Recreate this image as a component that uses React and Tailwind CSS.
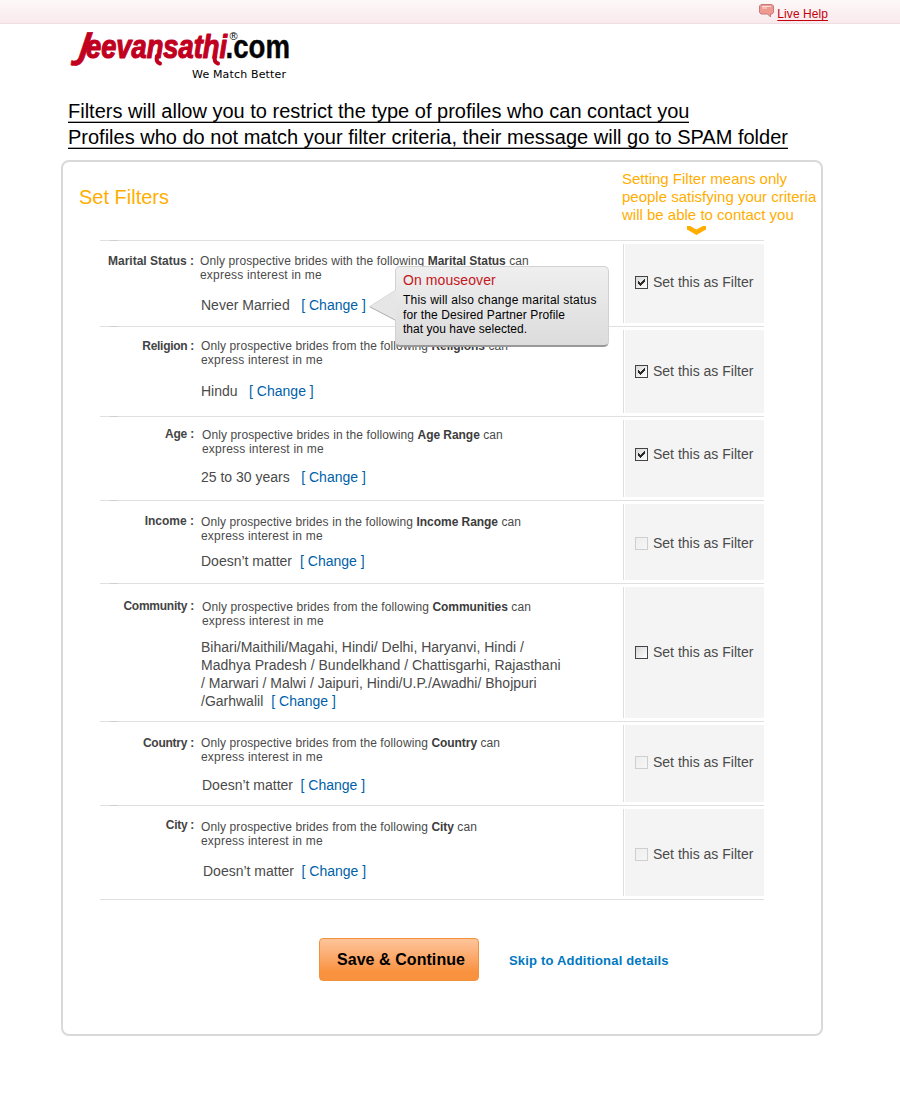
const rows = [
  {
    label: 'Marital Status :', labelCls: 'mt-[13px]', pre: 'with the following', strong: 'Marital Status',
    row: 'h-[86px]', desc: 'mt-[13px] ml-[6px]', value: ['Never Married'], valueCls: 'mt-[14px] ml-[7px]', gap: 'ml-[11.5px]',
    cell: 'pb-[2px]', state: 'checked', tip: true,
  },
  {
    label: 'Religion :', labelCls: 'mt-[12px] tracking-[-0.3px]', pre: 'from the following', strong: 'Religions',
    row: 'h-[90px]', desc: 'mt-[12px] ml-[7px]', value: ['Hindu'], valueCls: 'mt-[15px] ml-[7px]', gap: 'ml-[11.5px]',
    cell: '', state: 'checked',
  },
  {
    label: 'Age :', labelCls: 'mt-[10px] tracking-[-0.2px]', pre: 'in the following', strong: 'Age Range',
    row: 'h-[84px]', desc: 'mt-[11px] ml-[8px]', value: ['25 to 30 years'], valueCls: 'mt-[12px] ml-[7px]', gap: 'ml-[11.5px]',
    cell: 'pb-[8px]', state: 'checked',
  },
  {
    label: 'Income :', labelCls: 'mt-[13px]', pre: 'in the following', strong: 'Income Range',
    row: 'h-[83px]', desc: 'mt-[14px] ml-[7px]', value: ['Doesn’t matter'], valueCls: 'mt-[9px] ml-[7px]', gap: 'ml-[8px]',
    cell: 'pt-[3px]', state: 'disabled',
  },
  {
    label: 'Community :', labelCls: 'mt-[15px] tracking-[-0.25px]', pre: 'from the following', strong: 'Communities',
    row: 'h-[138px]', desc: 'mt-[16px] ml-[8px]',
    value: ['Bihari/Maithili/Magahi, Hindi/ Delhi, Haryanvi, Hindi /', 'Madhya Pradesh / Bundelkhand / Chattisgarhi, Rajasthani', '/ Marwari / Malwi / Jaipuri, Hindi/U.P./Awadhi/ Bhojpuri', '/Garhwalil'],
    valueCls: 'mt-[10px] ml-[7px]', gap: 'ml-[8px]', cell: '', state: 'empty',
  },
  {
    label: 'Country :', labelCls: 'mt-[14px] tracking-[-0.25px]', pre: 'from the following', strong: 'Country',
    row: 'h-[84px]', desc: 'mt-[14px] ml-[7px]', value: ['Doesn’t matter'], valueCls: 'mt-[12px] ml-[8px]', gap: 'ml-[7.5px]',
    cell: 'pb-[3px]', state: 'disabled', cellText: 'pb-0',
  },
  {
    label: 'City :', labelCls: 'mt-[12px] tracking-[-0.3px]', pre: 'from the following', strong: 'City',
    row: 'h-[94px]', desc: 'mt-[14px] ml-[7px]', value: ['Doesn’t matter'], valueCls: 'mt-[14px] ml-[9px]', gap: 'ml-[7.5px]',
    cell: 'pt-[4px]', state: 'disabled',
  },
];

function Checkbox({ state }) {
  const border = state === 'disabled' ? 'border-[#cfcfcf] from-[#eeeeee] to-[#f6f6f6]' : 'border-[#444] from-[#d8d8d8] to-white';
  return (
    <span className={`block size-[13px] shrink-0 border bg-linear-to-br ${border}`}>
      {state === 'checked' && (
        <svg viewBox="0 0 11 11" className="block size-[11px]" shapeRendering="crispEdges">
          <path d="M2 4h1v1h1v1h1v-1h1v-1h1v-1h1v-1h1v3h-1v1h-1v1h-1v1h-1v1h-1v-1h-1v-1h-1z" fill="#2b2b2b" />
        </svg>
      )}
    </span>
  );
}

function Tooltip() {
  return (
    <div className="absolute top-[25px] left-[269px] z-10 flex h-[81px] w-[240px]">
      <svg viewBox="0 0 27 81" className="relative z-10 block h-[81px] w-[27px] shrink-0">
        <path d="M27 24L0.8 40.5L27 54z" fill="#e6e6e6" />
        <path d="M26 24.5L0.8 40.5" stroke="#d8d8d8" fill="none" />
        <path d="M0.8 40.8L26 54" stroke="#a9a9a9" fill="none" />
      </svg>
      <div className="-ml-px h-[81px] w-[214px] rounded-[5px] border border-b-2 border-[#d2d2d2] border-b-[#999] bg-linear-to-b from-[#efefef] to-[#dcdcdc] pt-[4px] pl-[7px] whitespace-nowrap">
        <div className="text-[14px] leading-[18px] tracking-[0.08px] text-[#c4161c]">On mouseover</div>
        <div className="mt-[4px] text-[12px] leading-[14.5px] tracking-[0.23px] text-black">
          This will also change marital status<br /><span className="tracking-[0.11px]">for the Desired Partner Profile</span><br /><span className="tracking-[0.03px]">that you have selected.</span>
        </div>
      </div>
    </div>
  );
}

function Row({ r }) {
  return (
    <div className={`relative flex border-t border-[#e0e0e0] ${r.row}`}>
      <span className="absolute -top-px left-[10px] h-px w-[8px] bg-[#cfcfcf]" />
      <div className={`w-[94px] shrink-0 text-right text-[12px] leading-[14px] font-bold whitespace-nowrap text-[#444] ${r.labelCls}`}>{r.label}</div>
      <div className="w-[429px] shrink-0 whitespace-nowrap text-[#4a4a4a]">
        <p className={`text-[12px] leading-[14px] tracking-[0.1px] ${r.desc}`}>
          Only prospective brides {r.pre} <b className="tracking-[-0.05px] text-[#3c3c3c]">{r.strong}</b> can<br />
          <span className="tracking-[0.2px]">express interest in me</span>
        </p>
        <p className={`text-[14px] leading-[18px] ${r.valueCls}`}>
          {r.value.map((v, i) => (
            <span key={v}>{i > 0 && <br />}{v}</span>
          ))}
          <a className={`text-[#005fa9] ${r.gap}`}>[ Change ]</a>
        </p>
      </div>
      <div className="mt-[3px] mb-[3px] flex w-[141px] border-l border-[#dedede] pl-px">
        <div className={`flex flex-1 items-center gap-[5px] bg-[#f4f4f4] pl-[10px] text-[14px] leading-[18px] whitespace-nowrap text-[#4a4a4a] ${r.cell}`}>
          <Checkbox state={r.state} />
          <span className={r.cellText || 'pb-[2px]'}>Set this as Filter</span>
        </div>
      </div>
      {r.tip && <Tooltip />}
    </div>
  );
}

function Logo() {
  return (
    <svg viewBox="0 0 240 56" className="block h-[56px] w-[240px]">
      <g fill="#c1001f" stroke="#c1001f" strokeLinejoin="round" fontStyle="italic">
        <text transform="translate(9.500 31) skewX(-7)" x="0" y="0" fontFamily="Open Sans" fontWeight="700" fontSize="36" strokeWidth="0.6">J</text>
        <text x="18" y="31" fontFamily="Liberation Sans" fontWeight="700" fontSize="33" strokeWidth="1.2" textLength="141" lengthAdjust="spacingAndGlyphs">eevansathi</text>
        <path d="M89 29q-1.500 6 3 7.500" strokeWidth="4" fill="none" strokeLinecap="round" />
        <path d="M147 29q-1.500 6 3 7.500" strokeWidth="4" fill="none" strokeLinecap="round" />
      </g>
      <text x="157.500" y="31" fontFamily="Liberation Sans" fontWeight="700" fontSize="33" fill="#050505" stroke="#050505" strokeWidth="0.4" textLength="64.500" lengthAdjust="spacingAndGlyphs">.com</text>
      <text x="161.500" y="13" fontFamily="Liberation Sans" fontSize="11" fill="#000">®</text>
      <text x="124" y="51" fontFamily="DejaVu Sans" fontSize="11" fill="#000" textLength="94">We Match Better</text>
    </svg>
  );
}

export default function App() {
  return (
    <div className="h-[1105px] w-[900px] overflow-hidden bg-white font-['Liberation_Sans',Arial,sans-serif]">
      <header className="flex h-[24px] justify-end border-b border-[#eedee2] bg-linear-to-b from-[#fdf8f9] to-[#f9e9ec] pr-[72px]">
        <svg viewBox="0 0 16 14" className="mt-[4px] mr-[2.5px] block h-[14px] w-[16px]">
          <path d="M2 0.5h11l1.500 1.500v6.500l-1.500 1.500h-1.500v3l-3-3h-6.500l-1.500-1.500v-6.500z" fill="#ee9a90" stroke="#c67a7e" />
          <path d="M3 2.500h9M3 4h5" stroke="#fbdcd7" />
        </svg>
        <a className="mt-[7px] text-[12px] leading-[14px] tracking-[0.07px] text-[#c4000a] underline underline-offset-2">Live Help</a>
      </header>
      <div className="mt-[3px] ml-[68px]"><Logo /></div>
      <div className="mt-[15px] ml-[68px] text-[20px] leading-[26px] whitespace-nowrap text-black">
        <div className="h-[26px]"><span className="border-b border-black shadow-[inset_0_-1px_0_#aaa]">Filters will allow you to restrict the type of profiles who can contact you</span></div>
        <div className="h-[26px]"><span className="border-b border-black shadow-[inset_0_-1px_0_#aaa]">Profiles who do not match your filter criteria, their message will go to SPAM folder</span></div>
      </div>
      <main className="mt-[10px] ml-[61px] h-[876px] w-[762px] rounded-[8px] border-2 border-[#d9d9d9]">
        <div className="flex h-[78px] justify-between whitespace-nowrap text-[#ffae00]">
          <h1 className="mt-[23px] ml-[16px] text-[20px] leading-[24px]">Set Filters</h1>
          <div className="mt-[8px] w-[199px] text-[15px] leading-[18px]">
            Setting Filter means only<br />people satisfying your criteria<br />will be able to contact you
            <svg viewBox="0 0 19 9" className="mt-[2px] ml-[65px] block h-[9px] w-[19px]">
              <path d="M0 0h3l6.500 3.500l6.500-3.500h3v3.500l-9.500 5.500l-9.500-5.500z" fill="#ffae00" />
            </svg>
          </div>
        </div>
        <div className="ml-[37px] w-[664px] border-b border-[#e0e0e0]">
          {rows.map((r) => <Row key={r.label} r={r} />)}
        </div>
        <div className="mt-[38px] ml-[256px] flex items-center">
          <button className="h-[43px] w-[160px] rounded-[4px] border border-[#f2913c] bg-linear-to-b from-[#fdc59a] to-[#f9923e] to-80% pl-[4px] text-[16px] tracking-[0.06px] font-bold text-black">Save &amp; Continue</button>
          <a className="ml-[30px] pt-[2px] text-[13px] font-bold tracking-[0.19px] whitespace-nowrap text-[#0078c1]">Skip to Additional details</a>
        </div>
      </main>
    </div>
  );
}
